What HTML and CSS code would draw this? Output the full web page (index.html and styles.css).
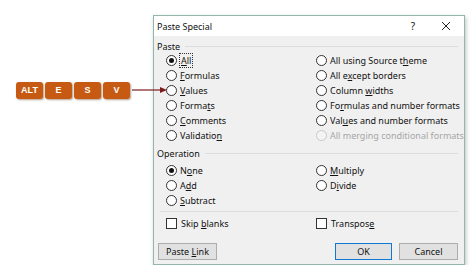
FILE: index.html
```html
<!DOCTYPE html>
<html>
    <head>
        <link rel="stylesheet" href="styles.css">
    </head>
    <body>
        <div class="page">
            <div class="keys">
                <span class="key">ALT</span>
                <span class="key">E</span>
                <span class="key">S</span>
                <span class="key">V</span>
                <svg class="arrow" width="36" height="8" viewBox="0 0 36 8">
                    <line x1="0" y1="4" x2="30" y2="4" stroke="#7d1c1c" stroke-width="1.2"/>
                    <polygon points="28,1 35,4 28,7" fill="#7d1c1c"/>
                </svg>
            </div>

            <div class="dialog">
                <div class="titlebar">
                    <span class="title">Paste Special</span>
                    <span class="help">?</span>
                    <svg class="close" width="10" height="10" viewBox="0 0 10 10">
                        <path d="M1 1L9 9M9 1L1 9" stroke="#222" stroke-width="1"/>
                    </svg>
                </div>

                <div class="body">
                    <div class="group-head"><span>Paste</span><i></i></div>
                    <div class="opts paste">
                        <div class="opt"><b class="radio on"></b><span class="focus"><u>A</u>ll</span></div>
                        <div class="opt"><b class="radio"></b><span>All using Source t<u>h</u>eme</span></div>
                        <div class="opt"><b class="radio"></b><span><u>F</u>ormulas</span></div>
                        <div class="opt"><b class="radio"></b><span>All e<u>x</u>cept borders</span></div>
                        <div class="opt"><b class="radio"></b><span><u>V</u>alues</span></div>
                        <div class="opt"><b class="radio"></b><span>Column <u>w</u>idths</span></div>
                        <div class="opt"><b class="radio"></b><span>Forma<u>t</u>s</span></div>
                        <div class="opt"><b class="radio"></b><span>Fo<u>r</u>mulas and number formats</span></div>
                        <div class="opt"><b class="radio"></b><span><u>C</u>omments</span></div>
                        <div class="opt"><b class="radio"></b><span>Val<u>u</u>es and number formats</span></div>
                        <div class="opt"><b class="radio"></b><span>Validatio<u>n</u></span></div>
                        <div class="opt off"><b class="radio"></b><span>All merging conditional formats</span></div>
                    </div>

                    <div class="group-head op"><span>Operation</span><i></i></div>
                    <div class="opts operation">
                        <div class="opt"><b class="radio on"></b><span>N<u>o</u>ne</span></div>
                        <div class="opt"><b class="radio"></b><span><u>M</u>ultiply</span></div>
                        <div class="opt"><b class="radio"></b><span>A<u>d</u>d</span></div>
                        <div class="opt"><b class="radio"></b><span>D<u>i</u>vide</span></div>
                        <div class="opt"><b class="radio"></b><span><u>S</u>ubtract</span></div>
                        <div class="opt"></div>
                    </div>

                    <div class="sep"></div>

                    <div class="opts checks">
                        <div class="opt"><b class="check"></b><span>Skip <u>b</u>lanks</span></div>
                        <div class="opt"><b class="check"></b><span>Transpos<u>e</u></span></div>
                    </div>

                    <div class="buttons">
                        <button class="btn link">Paste <u>L</u>ink</button>
                        <span class="spacer"></span>
                        <button class="btn ok">OK</button>
                        <button class="btn">Cancel</button>
                    </div>
                </div>
            </div>
        </div>
    </body>
</html>
```

FILE: styles.css
```css
body{
    margin: 0;
    background: white;
    font-family: "Noto Sans", "Open Sans", sans-serif;
}

.page{
    display: flex;
    align-items: flex-start;
    padding-top: 15px;
    padding-left: 16px;
}

.keys{
    position: relative;
    display: flex;
    gap: 2px;
    margin-top: 67px;
}
.key{
    width: 27px;
    height: 17px;
    line-height: 17px;
    background: #c65a12;
    border-radius: 3px;
    box-shadow: 1px 1px 2px rgba(90,40,10,0.45);
    color: white;
    font-family: "Liberation Sans", sans-serif;
    font-weight: bold;
    font-size: 9px;
    text-align: center;
}
.arrow{
    position: absolute;
    left: 100%;
    top: 4px;
    margin-left: 2px;
    z-index: 5;
}

.dialog{
    width: 310px;
    margin-left: 23px;
    border: 1px solid #93b7aa;
    box-shadow: 1px 2px 4px rgba(0,0,0,0.25);
    background: #f0f0f0;
    color: #111;
    font-size: 9px;
}

.titlebar{
    display: flex;
    align-items: center;
    height: 20px;
    background: white;
    padding-left: 3px;
}
.title{
    flex: 1;
}
.help{
    margin-right: 26px;
    font-size: 10px;
}
.close{
    margin-right: 13px;
}

.body{
    padding: 3px 6px 4px 3px;
}

.group-head{
    display: flex;
    align-items: center;
    height: 14px;
}
.group-head i{
    flex: 1;
    height: 1px;
    background: #dcdcdc;
    margin-left: 5px;
}
.group-head.op{
    margin-top: 3px;
}

.opts{
    display: grid;
    grid-template-columns: 150px 1fr;
    padding-left: 9px;
}
.operation{
    margin-top: 3px;
}
.opt{
    display: flex;
    align-items: center;
    height: 15px;
    white-space: nowrap;
}
.opt.off{
    color: #a6a6a6;
}

.radio{
    box-sizing: border-box;
    width: 11px;
    height: 11px;
    border: 1px solid #333;
    border-radius: 50%;
    background: white;
    margin-right: 3px;
    display: flex;
    align-items: center;
    justify-content: center;
}
.radio.on::after{
    content: "";
    width: 5px;
    height: 5px;
    border-radius: 50%;
    background: #111;
}
.off .radio{
    border-color: #c8c8c8;
    background: #f4f4f4;
}
.focus{
    outline: 1px dotted #333;
    padding: 0 1px;
}

.sep{
    height: 1px;
    background: #dcdcdc;
    margin: 3px 0 4px 3px;
}

.check{
    box-sizing: border-box;
    width: 11px;
    height: 11px;
    border: 1px solid #333;
    background: white;
    margin-right: 4px;
}

.buttons{
    display: flex;
    gap: 7px;
    margin-top: 12px;
    padding-left: 1px;
}
.spacer{
    flex: 1;
}
.btn{
    width: 59px;
    height: 17px;
    padding: 0;
    border: 1px solid #adadad;
    background: #e1e1e1;
    font-family: inherit;
    font-size: 9px;
    color: #111;
}
.btn.ok{
    width: 57px;
    border-color: #0f78d4;
}
```
